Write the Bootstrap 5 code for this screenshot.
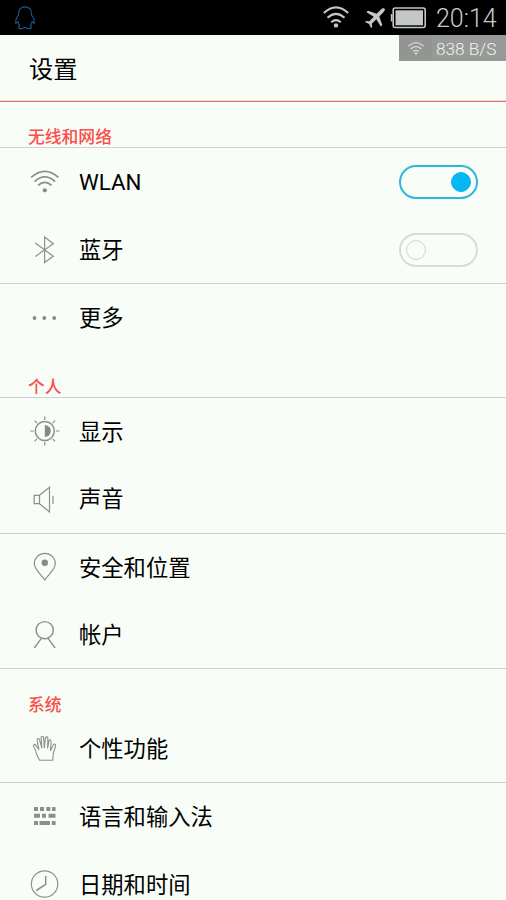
<!DOCTYPE html>
<html lang="zh-CN">
<head>
  <meta charset="UTF-8" />
  <meta name="viewport" content="width=device-width, initial-scale=1.0"/>
  <title>设置</title>
  <link href="https://cdn.jsdelivr.net/npm/bootstrap@5.3.7/dist/css/bootstrap.min.css" rel="stylesheet"/>
  <style>
    body {
      background: #f8fdf8;
      color: #000;
      font-family: Roboto, "Noto Sans CJK SC", sans-serif;
      height: 900px;
      overflow: hidden;
    }

    svg {
      display: block;
      flex-shrink: 0;
      fill: none;
      overflow: visible;
    }

    .status-bar {
      height: 35px;
      background: #000;
      padding: 0 8px 0 14px;
    }

    .status-time {
      width: 62px;
      margin-left: 9px;
      padding-top: 2px;
      font-size: 25px;
      font-weight: 300;
      line-height: 35px;
      color: #c8ccc8;
      white-space: nowrap;
    }

    .plane-icon {
      margin-left: 16px;
    }

    .battery-icon {
      margin-left: 6px;
    }

    .speed-tag {
      top: 35px;
      right: 0;
      width: 107px;
      height: 26px;
      background: #979a97;
      border-radius: 2px 0 0 2px;
      color: #eff3ef;
      font-size: 17.2px;
      font-weight: 300;
      line-height: 28px;
      white-space: nowrap;
    }

    .speed-icon {
      width: 33px;
      height: 26px;
      background: #929592;
    }

    .page-head {
      height: 67px;
      padding: 2px 29px 0;
      border-bottom: 1px solid #e0706c;
      box-shadow: inset 0 -1px #f6dcd8;
    }

    .page-head h1 {
      font-size: 24.3px;
      font-weight: 400;
      line-height: 66px;
    }

    .group-title {
      height: 46px;
      padding: 0 28px;
      font-size: 16.8px;
      font-weight: 500;
      line-height: 20px;
      color: #fa4e4a;
    }

    .setting-row {
      height: 68px;
      padding: 0 28px 0 29px;
      gap: 18px;
      font-size: 22.3px;
      line-height: 32px;
    }

    .row-short {
      height: 67px;
    }

    .row-name {
      padding-bottom: 1px;
    }

    .line {
      border-bottom: 1px solid #cdd1cd;
    }

    .setting-row svg {
      stroke: #8b908b;
      stroke-width: 1.2;
    }

    .toggle {
      width: 79px;
      height: 34px;
      border: 2px solid #d8dcd8;
      border-radius: 17px;
      padding: 0 5px;
    }

    .toggle span {
      width: 20px;
      height: 20px;
      border: 1px solid #d0d5d0;
      border-radius: 50%;
    }

    .toggle.on {
      border-color: #30b5dc;
    }

    .toggle.on span {
      background: #05b7f4;
      border-color: #05b7f4;
    }
  </style>
</head>
<body>
  <div class="status-bar d-flex align-items-center">
    <svg width="22" height="24" viewBox="0 0 22 24" stroke="#17558e" stroke-width="1.2" stroke-linejoin="round">
      <path d="M4.5 9C4 3.8 7 .8 11 .8s7 3 6.500 8.200c1.800 2.300 3.200 5 2.700 8.300l-2.200-1.500c-.2 1.700-.8 3-1.800 4.200 1.500.5 1.700 2.600 0 2.700-2.200.1-3.500 0-4.200-1.200h-2c-.7 1.200-2 1.300-4.200 1.200-1.700-.1-1.500-2.200 0-2.700-1-1.200-1.600-2.500-1.800-4.200l-2.200 1.500C1.300 14 2.700 11.300 4.500 9z"/>
    </svg>
    <svg class="ms-auto" width="26" height="22" viewBox="0 0 26 22" stroke="#c4c8c4" stroke-width="2.1">
      <path d="M.8 6.100Q13-5.300 25.200 6.100M4.500 10.800q8.500-8 17 0M8.300 15.300q4.700-4.300 9.400 0"/>
      <circle cx="13" cy="18.400" r="2.200" fill="#c4c8c4" stroke="none"/>
    </svg>
    <svg class="plane-icon" width="20" height="20" viewBox="0 0 20 20">
      <path fill="#c4c8c4" d="M19.400.6c-.9-.9-2.400-.3-3.500.8l-4.300 4.300L3 2.700 1.400 4.200l7.400 4.500-4.500 4.600-3.200-.4L0 14l4.100 2L6 20l1.200-1.100-.4-3.200 4.500-4.500 4.500 7.300 1.500-1.500-3-8.600 4.300-4.300c1.100-1.100 1.700-2.600.8-3.500z"/>
    </svg>
    <svg class="battery-icon" width="36" height="22" viewBox="0 0 36 22">
      <rect x="2.200" y="1" width="32" height="19.500" rx="2" stroke="#c4c8c4" stroke-width="1.600"/>
      <path d="M.6 7v7.500" stroke="#c4c8c4" stroke-width="1.600"/>
      <rect x="4.500" y="3.300" width="27.500" height="15" fill="#c4c8c4"/>
    </svg>
    <div class="status-time">20:14</div>
  </div>

  <div class="speed-tag position-absolute d-flex">
    <div class="speed-icon d-flex align-items-center justify-content-center">
      <svg width="16" height="13" viewBox="0 0 16 13" stroke="#d6dad6" stroke-width="1.200">
        <path d="M.5 4.200q7.500-7 15 0M2.800 7q5.200-4.600 10.400 0M5 9.600q3-2.600 6 0"/>
        <circle cx="8" cy="11.400" r="1.200" fill="#d6dad6" stroke="none"/>
      </svg>
    </div>
    <span class="ps-1">838 B/S</span>
  </div>

  <header class="page-head">
    <h1 class="m-0">设置</h1>
  </header>

  <main>
    <div class="group-title line d-flex align-items-end">无线和网络</div>
    <div class="setting-row d-flex align-items-center">
      <svg width="32" height="32" viewBox="0 0 32 32">
        <path stroke-width="1.700" d="M2.200 11.300q13.600-12 27.200 0M5.500 15.600q10.300-9.400 20.600 0M9 19.300q6.800-6 13.600 0"/>
        <circle cx="15.800" cy="24.300" r="2.100" fill="#858a85" stroke="none"/>
      </svg>
      <span>WLAN</span>
      <div class="toggle on ms-auto d-flex align-items-center justify-content-end"><span></span></div>
    </div>
    <div class="setting-row line d-flex align-items-center">
      <svg width="32" height="32" viewBox="0 0 32 32">
        <path d="M6.300 9l18 13.300-8.700 6.200v-25.500l8.700 6.700L6.300 22.500"/>
      </svg>
      <span>蓝牙</span>
      <div class="toggle ms-auto d-flex align-items-center"><span></span></div>
    </div>
    <div class="setting-row d-flex align-items-center">
      <svg width="32" height="32" viewBox="0 0 32 32">
        <g fill="#858a85" stroke="none">
          <circle cx="5.500" cy="16" r="1.900"/>
          <circle cx="15.300" cy="16" r="1.900"/>
          <circle cx="25.200" cy="16" r="1.900"/>
        </g>
      </svg>
      <span class="row-name">更多</span>
    </div>

    <div class="group-title line d-flex align-items-end">个人</div>
    <div class="setting-row d-flex align-items-center">
      <svg width="32" height="32" viewBox="0 0 32 32">
        <circle cx="15.800" cy="15" r="9.500" stroke-width="1.500"/>
        <path d="M15.800 9a6 6 0 0 1 0 12z" fill="#858a85" stroke="none"/>
        <path d="M15.800.5v3.500M15.800 26v3.500M1.200 15h3.500M27 15h3.500M5.500 4.700L8 7.200M26.100 4.700l-2.500 2.500M5.500 25.300L8 22.800M26.100 25.300l-2.500-2.500"/>
      </svg>
      <span class="row-name">显示</span>
    </div>
    <div class="setting-row line d-flex align-items-center">
      <svg width="32" height="32" viewBox="0 0 32 32">
        <path d="M10.500 11.300h-5.300v8.400h5.300zM10.500 11.300l10-8v24.600l-10-8.200M24 11.800v8.200"/>
      </svg>
      <span class="row-name">声音</span>
    </div>
    <div class="setting-row d-flex align-items-center">
      <svg width="32" height="32" viewBox="0 0 32 32">
        <path d="M15.800 28C13 23.200 5.300 17.800 5.300 11.600a10.500 10.200 0 0 1 21 0C26.300 17.800 18.600 23.200 15.800 28z"/>
        <circle cx="15.800" cy="10.800" r="3.200" fill="#858a85" stroke="none"/>
      </svg>
      <span class="row-name">安全和位置</span>
    </div>
    <div class="setting-row row-short line d-flex align-items-center">
      <svg width="32" height="32" viewBox="0 0 32 32">
        <circle cx="15.700" cy="11.200" r="8.600" stroke-width="1.400"/>
        <path stroke-width="1.400" d="M12.400 19.300L5.200 29M19 19.300L26.200 29"/>
      </svg>
      <span>帐户</span>
    </div>

    <div class="group-title d-flex align-items-end pb-0">系统</div>
    <div class="setting-row line d-flex align-items-center">
      <svg width="32" height="32" viewBox="0 0 32 32">
        <path stroke-width="1.100" stroke-linejoin="round" d="M10.500 27.300L7.300 20.500c-.2-2.800-1.500-5-2.700-7.200-.7-1.500 1.100-2.600 2.100-1.200l3.200 4.300-1.800-9.300c-.2-1.700 1.800-2.200 2.300-.6l2.500 8.500-.8-10.200c0-1.900 2.300-2 2.500-.2l.8 10.300 1-9.900c.3-1.700 2.500-1.500 2.400.3l-.2 10 1.300-7.500c.4-1.600 2.400-1.200 2.200.4l-.6 9.300 2.800-5.600c.8-1.500 2.800-.8 2.300.9l-2.400 8.200-.4 6.300z"/>
      </svg>
      <span>个性功能</span>
    </div>
    <div class="setting-row d-flex align-items-center">
      <svg width="32" height="32" viewBox="0 0 32 32">
        <path stroke-width="4" stroke="#8b908b" d="M5 8h4M11 8h4M17.300 8h4M23 8h3.600M5 14.800h6M13 14.800h4M19.500 14.800h7M5 22h4M10.500 22h10.500M22.800 22h3.800"/>
      </svg>
      <span>语言和输入法</span>
    </div>
    <div class="setting-row d-flex align-items-center">
      <svg width="32" height="32" viewBox="0 0 32 32">
        <circle cx="15.600" cy="15" r="13.200"/>
        <path stroke-width="1.500" d="M16.700 7v8.300L7.300 21.500"/>
      </svg>
      <span>日期和时间</span>
    </div>
  </main>

  <script src="https://cdn.jsdelivr.net/npm/bootstrap@5.3.7/dist/js/bootstrap.bundle.min.js"></script>
</body>
</html>
